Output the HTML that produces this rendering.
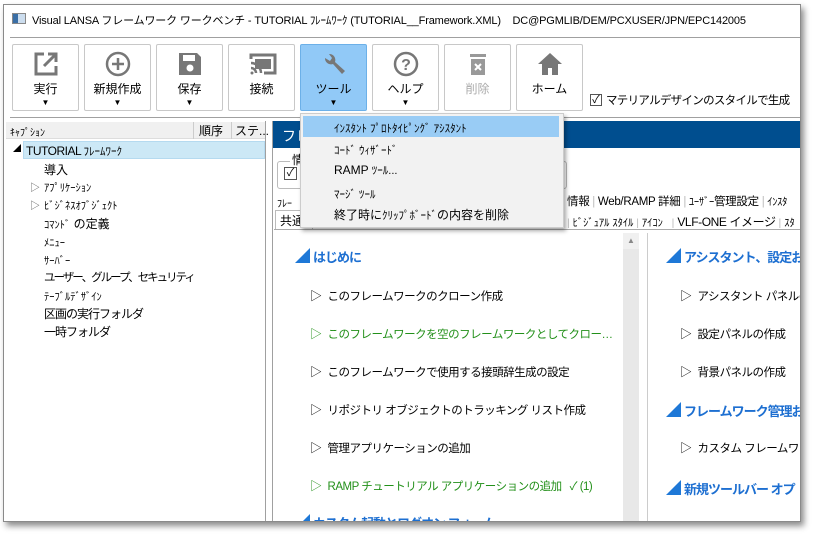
<!DOCTYPE html>
<html><head><meta charset="utf-8">
<style>
*{box-sizing:border-box;margin:0;padding:0}
body{width:818px;height:534px;background:#fff;position:relative;overflow:hidden;font-family:"Liberation Sans","Noto Sans CJK JP",sans-serif;color:#000}
.a{position:absolute;white-space:nowrap}
#win{position:absolute;left:3px;top:4px;width:798px;height:518px;background:#fff;border:1px solid #8a8a8a;box-shadow:3px 4px 6px rgba(0,0,0,.45);overflow:hidden}
.btn{position:absolute;top:39px;width:67px;height:67px;border:1px solid #c8c8c8;border-radius:2px;background:#fff;text-align:center;font-size:12px}
.btn svg{position:absolute;left:20px;top:6px}
.btn .l{position:absolute;left:0;right:0;top:35px}
.btn .t{position:absolute;left:0;right:0;top:53px;font-size:8px}
.tr{font-size:12px;position:absolute;white-space:nowrap}
.tv{font-size:11px;letter-spacing:0}
.it{position:absolute;font-size:11.5px;letter-spacing:-0.5px;white-space:nowrap}
.it b{font-weight:normal;margin-right:6px;font-size:12px}
.g{color:#23901a}
.h{position:absolute;font-size:13px;letter-spacing:-1px;font-weight:bold;color:#1d6fd1;white-space:nowrap}
.tri{display:inline-block;width:0;height:0;border-left:15px solid transparent;border-bottom:15px solid #1e78d7;vertical-align:-1px;margin-right:3px}
.m{position:absolute;left:33px;font-size:11px;white-space:nowrap}
</style></head><body>
<div id="win">
 <div class="a" style="left:8px;top:8px;width:14px;height:11px;border:1px solid #888;background:linear-gradient(90deg,#3a6ea5 40%,#cde 40%)"></div>
 <div class="a" style="left:28px;top:7px;font-size:11px;letter-spacing:-0.15px">Visual LANSA フレームワーク ワークベンチ - TUTORIAL ﾌﾚｰﾑﾜｰｸ (TUTORIAL__Framework.XML)&nbsp;&nbsp;&nbsp; DC@PGMLIB/DEM/PCXUSER/JPN/EPC142005</div>
 <div class="a" style="left:6px;top:32px;width:792px;height:1px;background:#a0a0a0"></div>

 <div class="btn" style="left:8px"><svg width="26" height="26" viewBox="0 0 26 26"><path d="M11 3H3v20h20v-8" fill="none" stroke="#777" stroke-width="3"/><path d="M15 3h8v8M23 3L11 15" fill="none" stroke="#777" stroke-width="3"/></svg><div class="l">実行</div><div class="t">▼</div></div>
 <div class="btn" style="left:80px"><svg width="26" height="26" viewBox="0 0 26 26"><circle cx="13" cy="13" r="11" fill="none" stroke="#777" stroke-width="2.5"/><path d="M13 7v12M7 13h12" stroke="#777" stroke-width="2.5"/></svg><div class="l">新規作成</div><div class="t">▼</div></div>
 <div class="btn" style="left:152px"><svg width="26" height="26" viewBox="0 0 26 26"><path d="M2 2h18l4 4v18H2z" fill="#777"/><rect x="6" y="4" width="12" height="6" fill="#fff"/><circle cx="13" cy="17" r="3.5" fill="#fff"/></svg><div class="l">保存</div><div class="t">▼</div></div>
 <div class="btn" style="left:224px"><svg width="28" height="26" viewBox="0 0 28 26"><path d="M2 8V4h24v18H15" fill="none" stroke="#777" stroke-width="3"/><rect x="6" y="8" width="16" height="10" fill="#777"/><path d="M2 12a10 10 0 0 1 10 10M2 17a5 5 0 0 1 5 5" fill="none" stroke="#777" stroke-width="2.5"/><circle cx="3" cy="22" r="1.5" fill="#777"/></svg><div class="l">接続</div></div>
 <div class="btn" style="left:296px;background:#91c9f7;border-color:#6cb0e8"><svg width="26" height="26" viewBox="0 0 26 26"><path d="M4 7a6 6 0 0 0 8 6l9 10 3-3-10-9a6 6 0 0 0-6-8l3 4-2 3z" fill="#777"/></svg><div class="l">ツール</div><div class="t">▼</div></div>
 <div class="btn" style="left:368px"><svg width="26" height="26" viewBox="0 0 26 26"><circle cx="13" cy="13" r="11" fill="none" stroke="#777" stroke-width="2.5"/><text x="13" y="19" font-size="16" font-weight="bold" text-anchor="middle" fill="#777" font-family="Liberation Sans">?</text></svg><div class="l">ヘルプ</div><div class="t">▼</div></div>
 <div class="btn" style="left:440px;color:#aaa"><svg width="26" height="26" viewBox="0 0 26 26"><rect x="5" y="3" width="16" height="3" fill="#999"/><rect x="6" y="8" width="14" height="16" fill="#999"/><path d="M10 13l6 6M16 13l-6 6" stroke="#fff" stroke-width="2"/></svg><div class="l">削除</div></div>
 <div class="btn" style="left:512px"><svg width="26" height="26" viewBox="0 0 26 26"><path d="M13 2L1 13h4v11h6v-7h4v7h6V13h4z" fill="#777"/></svg><div class="l">ホーム</div></div>
 <div class="a" style="left:586px;top:89px;width:12px;height:12px;border:1px solid #555;font-size:11px;line-height:10px;text-align:center">✓</div>
 <div class="a" style="left:602px;top:87px;font-size:11.5px;letter-spacing:-0.7px">マテリアルデザインのスタイルで生成</div>
 <div class="a" style="left:6px;top:112px;width:792px;height:1px;background:#a0a0a0"></div>

 <div class="a" style="left:2px;top:116px;width:260px;height:402px;border-right:1px solid #a0a0a0"></div>
 <div class="a" style="left:2px;top:117px;width:259px;height:17px;background:#f0f0f0;border-bottom:1px solid #ddd"></div>
 <div class="a" style="left:189px;top:117px;width:1px;height:17px;background:#ccc"></div>
 <div class="a" style="left:227px;top:117px;width:1px;height:17px;background:#ccc"></div>
 <div class="tr" style="left:6px;top:119px;font-size:10px">ｷｬﾌﾟｼｮﾝ</div>
 <div class="tr" style="left:195px;top:117px">順序</div>
 <div class="tr" style="left:231px;top:117px">ステ...</div>
 <div class="a" style="left:19px;top:136px;width:242px;height:18px;background:#cce8f6;border:1px solid #b5daf0"></div>
 <div class="tr" style="left:9px;top:138px;font-size:8px">◢</div>
 <div class="tr" style="left:22px;top:138px;letter-spacing:-0.5px">TUTORIAL <span class="tv" style="letter-spacing:0">ﾌﾚｰﾑﾜｰｸ</span></div>
 <div class="tr" style="left:40px;top:156px">導入</div>
 <div class="tr" style="left:26px;top:174px;font-size:10px;color:#555">▷</div><div class="tr tv" style="left:40px;top:175px;font-size:10.5px">ｱﾌﾟﾘｹｰｼｮﾝ</div>
 <div class="tr" style="left:26px;top:192px;font-size:10px;color:#555">▷</div><div class="tr tv" style="left:40px;top:193px;font-size:10.5px">ﾋﾞｼﾞﾈｽｵﾌﾞｼﾞｪｸﾄ</div>
 <div class="tr" style="left:40px;top:210px"><span class="tv" style="font-size:10.5px">ｺﾏﾝﾄﾞ</span> の定義</div>
 <div class="tr tv" style="left:40px;top:230px;font-size:10.5px">ﾒﾆｭｰ</div>
 <div class="tr tv" style="left:40px;top:248px;font-size:10.5px">ｻｰﾊﾞｰ</div>
 <div class="tr" style="left:40px;top:264px;font-size:11.5px;letter-spacing:-2px">ユーザー、グループ、セキュリティ</div>
 <div class="tr tv" style="left:40px;top:284px;font-size:10.5px">ﾃｰﾌﾞﾙﾃﾞｻﾞｲﾝ</div>
 <div class="tr" style="left:40px;top:300px;letter-spacing:-1px">区画の実行フォルダ</div>
 <div class="tr" style="left:40px;top:318px;letter-spacing:-1px">一時フォルダ</div>

 <div class="a" style="left:268px;top:116px;width:530px;height:402px;border-left:1px solid #a0a0a0"></div>
 <div class="a" style="left:269px;top:116px;width:529px;height:27px;background:#004e8f"></div>
 <div class="tr" style="left:278px;top:121px;color:#fff;font-size:14px">フレ</div>
 <div class="a" style="left:273px;top:156px;width:290px;height:28px;border:1px solid #bbb;border-radius:3px"></div>
 <div class="tr" style="left:286px;top:146px;background:#fff;padding:0 2px">情</div>
 <div class="a" style="left:280px;top:162px;width:13px;height:13px;border:1px solid #555;font-size:11px;line-height:11px;text-align:center">✓</div>
 <div class="tr" style="left:273px;top:190px;font-size:10px">ﾌﾚｰ</div>
 <div class="tr" style="left:563px;top:188px;font-size:11.5px;letter-spacing:-0.3px">情報 <span style="color:#bbb">|</span> Web/RAMP 詳細 <span style="color:#bbb">|</span> <span style="font-size:10.5px">ﾕｰｻﾞｰ</span>管理設定 <span style="color:#bbb">|</span> <span style="font-size:10.5px">ｲﾝｽﾀ</span></div>
 <div class="a" style="left:271px;top:205px;width:38px;height:20px;border:1px solid #bbb;border-bottom:none;background:#fff"></div>
 <div class="tr" style="left:276px;top:207px">共通</div>
 <div class="tr" style="left:563px;top:208px;font-size:10.5px"><span style="color:#bbb">|</span> ﾋﾞｼﾞｭｱﾙ ｽﾀｲﾙ <span style="color:#bbb">|</span> ｱｲｺﾝ&nbsp;&nbsp;&nbsp;<span style="color:#bbb">|</span> <span style="font-size:12px;letter-spacing:-0.4px">VLF-ONE イメージ</span> <span style="color:#bbb">|</span> ｽﾀ</div>
 <div class="a" style="left:270px;top:224px;width:528px;height:1px;background:#aaa"></div>
 <div class="a" style="left:619px;top:228px;width:16px;height:290px;background:#e8e8e8"></div>
 <div class="a" style="left:619px;top:228px;width:16px;height:16px;background:#f0f0f0;font-size:8px;color:#888;text-align:center;line-height:16px">▲</div>
 <div class="a" style="left:643px;top:228px;width:1px;height:290px;background:#ccc"></div>

 <div class="h" style="left:291px;top:242px"><span class="tri"></span>はじめに</div>
 <div class="it" style="left:306px;top:282px"><b>▷</b>このフレームワークのクローン作成</div>
 <div class="it g" style="left:306px;top:320px"><b>▷</b>このフレームワークを空のフレームワークとしてクロー…</div>
 <div class="it" style="left:306px;top:358px"><b>▷</b>このフレームワークで使用する接頭辞生成の設定</div>
 <div class="it" style="left:306px;top:396px"><b>▷</b>リポジトリ オブジェクトのトラッキング リスト作成</div>
 <div class="it" style="left:306px;top:434px"><b>▷</b>管理アプリケーションの追加</div>
 <div class="it g" style="left:306px;top:472px"><b>▷</b>RAMP チュートリアル アプリケーションの追加&nbsp;&nbsp; ✓ (1)</div>
 <div class="h" style="left:291px;top:508px"><span class="tri"></span>カスタム起動とログオン フォーム</div>

 <div class="h" style="left:662px;top:242px"><span class="tri"></span>アシスタント、設定お</div>
 <div class="it" style="left:676px;top:282px"><b>▷</b>アシスタント パネルの</div>
 <div class="it" style="left:676px;top:320px"><b>▷</b>設定パネルの作成</div>
 <div class="it" style="left:676px;top:358px"><b>▷</b>背景パネルの作成</div>
 <div class="h" style="left:662px;top:396px"><span class="tri"></span>フレームワーク管理お</div>
 <div class="it" style="left:676px;top:434px"><b>▷</b>カスタム フレームワー</div>
 <div class="h" style="left:662px;top:474px"><span class="tri"></span>新規ツールバー オプ</div>

 <div class="a" style="left:296px;top:108px;width:264px;height:115px;background:#f2f2f2;border:1px solid #ccc;box-shadow:2px 3px 4px rgba(0,0,0,.35)">
  <div class="a" style="left:2px;top:2px;width:256px;height:21px;background:#99ccf5"></div>
  <div class="m" style="top:6px">ｲﾝｽﾀﾝﾄ ﾌﾟﾛﾄﾀｲﾋﾟﾝｸﾞ ｱｼｽﾀﾝﾄ</div>
  <div class="m" style="top:28px">ｺｰﾄﾞ ｳｨｻﾞｰﾄﾞ</div>
  <div class="m" style="top:48px;font-size:12px">RAMP <span style="font-size:11px">ﾂｰﾙ...</span></div>
  <div class="m" style="top:72px">ﾏｰｼﾞ ﾂｰﾙ</div>
  <div class="m" style="top:92px;font-size:12px">終了時に<span style="font-size:11px">ｸﾘｯﾌﾟﾎﾞｰﾄﾞ</span>の内容を削除</div>
 </div>
</div>
</body></html>
